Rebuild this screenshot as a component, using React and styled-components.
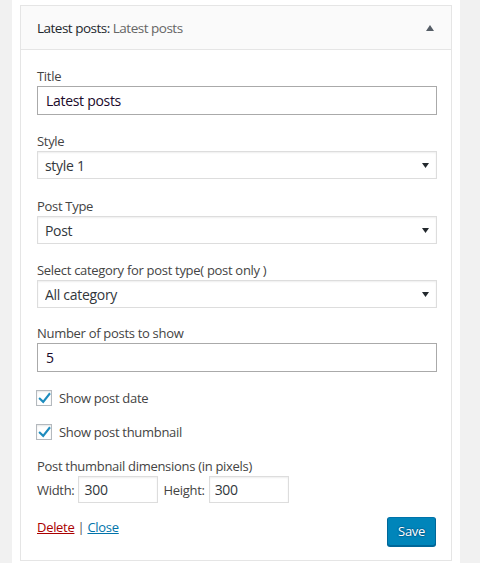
import React, { useState } from 'react';
import styled, { createGlobalStyle } from 'styled-components';

const GlobalStyle = createGlobalStyle`
    html, body {
        margin: 0;
        padding: 0;
        background: #f1f1f1;
    }
    body {
        font-family: "Open Sans", "Noto Sans", sans-serif;
        font-size: 13px;
        color: #444;
    }
    * {
        box-sizing: border-box;
    }
`;

const Column = styled.div`
    width: 448px;
    margin-left: 12px;
    min-height: 563px;
    background: #fff;
    padding: 5px 8px 3px;
`;

const Widget = styled.div`
    border: 1px solid #e5e5e5;
    background: #fff;
`;

const WidgetHeader = styled.div`
    height: 44px;
    display: flex;
    align-items: center;
    justify-content: space-between;
    padding: 0 17px 0 16px;
    background: #fafafa;
    border-bottom: 1px solid #e5e5e5;
`;

const WidgetTitle = styled.h3`
    margin: 0;
    font-size: 13.5px;
    font-weight: 400;
    color: #23282d;
    letter-spacing: -0.5px;
`;

const InTitle = styled.span`
    color: #666;
`;

const ToggleArrow = styled.svg`
    width: 8px;
    height: 6px;
    fill: #555d66;
`;

const WidgetBody = styled.div`
    padding: 16px 14px 14px 16px;
`;

const Field = styled.div`
    margin-top: ${({ $gap }) => $gap}px;
    &:first-child {
        margin-top: 0;
    }
`;

const Label = styled.label`
    display: block;
    line-height: 20px;
    color: #444;
    letter-spacing: -0.3px;
`;

const TextInput = styled.input`
    display: block;
    width: 100%;
    height: 29px;
    margin: 0;
    padding: 0 8px;
    font-family: inherit;
    font-size: 14px;
    letter-spacing: -0.3px;
    color: #1a0a2a;
    background: #fff;
    border: 1px solid #aaa;
    border-radius: 0;
    outline: none;
`;

const SelectWrap = styled.div`
    position: relative;
`;

const Select = styled.select`
    display: block;
    width: 100%;
    height: 28px;
    margin: 0;
    padding: 0 24px 0 7px;
    font-family: inherit;
    font-size: 14px;
    letter-spacing: -0.3px;
    color: #32373c;
    background: #fff;
    border: 1px solid #ddd;
    border-radius: 0;
    box-shadow: inset 0 1px 2px rgba(0, 0, 0, 0.07);
    appearance: none;
    outline: none;
`;

const SelectArrow = styled.svg`
    position: absolute;
    right: 8px;
    top: 12px;
    width: 7px;
    height: 5px;
    fill: #23282d;
    pointer-events: none;
`;

const CheckRow = styled.label`
    display: flex;
    align-items: center;
    gap: 7px;
    margin-top: ${({ $gap }) => $gap}px;
    line-height: 20px;
    color: #444;
    letter-spacing: -0.3px;
    cursor: pointer;
`;

const HiddenCheck = styled.input`
    display: none;
`;

const CheckBox = styled.span`
    width: 16px;
    height: 16px;
    margin-left: -1px;
    border: 1px solid #b4b9be;
    background: #fff;
    box-shadow: inset 0 1px 2px rgba(0, 0, 0, 0.1);
    display: flex;
    align-items: center;
    justify-content: center;
`;

const CheckMark = styled.svg`
    width: 13px;
    height: 12px;
    fill: #1e8cbe;
`;

const SizeRow = styled.div`
    display: flex;
    align-items: center;
    gap: 4px;
    color: #444;
    letter-spacing: -0.3px;
`;

const SizeInput = styled.input`
    width: 80px;
    height: 27px;
    margin: 0 ${({ $end }) => ($end ? 0 : 1)}px 0 0;
    padding: 0 5px;
    font-family: inherit;
    font-size: 14px;
    letter-spacing: -0.3px;
    color: #32373c;
    border: 1px solid #ddd;
    box-shadow: inset 0 1px 2px rgba(0, 0, 0, 0.07);
    outline: none;
`;

const Controls = styled.div`
    display: flex;
    justify-content: space-between;
    align-items: flex-start;
    margin-top: 13px;
    padding-right: 1px;
`;

const Links = styled.div`
    padding-top: 1px;
    line-height: 20px;
    color: #555;
    letter-spacing: -0.3px;
`;

const ActionLink = styled.a`
    color: ${({ $danger }) => ($danger ? '#a00' : '#0073aa')};
    text-decoration: underline;
    cursor: pointer;
`;

const SaveButton = styled.button`
    height: 29px;
    margin-top: 1px;
    padding: 0 10px 1px;
    font-family: inherit;
    font-size: 13px;
    letter-spacing: -0.3px;
    color: #fff;
    background: #0085ba;
    border: 1px solid;
    border-color: #0073aa #006799 #006799;
    border-radius: 3px;
    box-shadow: 0 1px 0 #006799;
    text-shadow: 0 -1px 1px #006799, 1px 0 1px #006799, 0 1px 1px #006799, -1px 0 1px #006799;
    cursor: pointer;
`;

const selects = [
    { label: 'Style', value: 'style 1', options: ['style 1', 'style 2', 'style 3'], gap: 16 },
    { label: 'Post Type', value: 'Post', options: ['Post', 'Page'], gap: 17 },
    { label: 'Select category for post type( post only )', value: 'All category', options: ['All category'], gap: 16 },
];

const Arrow = () => (
    <SelectArrow viewBox="0 0 7 5">
        <polygon points="0,0 7,0 3.5,5" />
    </SelectArrow>
);

const Check = ({ checked, onChange, children, gap }) => (
    <CheckRow $gap={gap}>
        <HiddenCheck type="checkbox" checked={checked} onChange={onChange} />
        <CheckBox>
            {checked && (
                <CheckMark viewBox="0 0 13 12">
                    <path d="M11.2 0.6 L12.8 1.9 L5.3 11.4 L0.4 6.8 L1.8 5.3 L5.1 8.3 Z" />
                </CheckMark>
            )}
        </CheckBox>
        {children}
    </CheckRow>
);

const App = () => {
    const [form, setForm] = useState({
        title: 'Latest posts',
        number: '5',
        showDate: true,
        showThumb: true,
        width: '300',
        height: '300',
        selects: selects.map(s => s.value),
    });

    const update = (key) => (e) => setForm({ ...form, [key]: e.target.value });
    const toggle = (key) => () => setForm({ ...form, [key]: !form[key] });

    return (
        <>
            <GlobalStyle />
            <Column>
                <Widget>
                    <WidgetHeader>
                        <WidgetTitle>
                            Latest posts: <InTitle>{form.title}</InTitle>
                        </WidgetTitle>
                        <ToggleArrow viewBox="0 0 8 6">
                            <polygon points="4,0 8,6 0,6" />
                        </ToggleArrow>
                    </WidgetHeader>
                    <WidgetBody>
                        <Field $gap={0}>
                            <Label>Title</Label>
                            <TextInput value={form.title} onChange={update('title')} />
                        </Field>
                        {selects.map((s, i) => (
                            <Field $gap={s.gap} key={s.label}>
                                <Label>{s.label}</Label>
                                <SelectWrap>
                                    <Select
                                        value={form.selects[i]}
                                        onChange={(e) => {
                                            const next = [...form.selects];
                                            next[i] = e.target.value;
                                            setForm({ ...form, selects: next });
                                        }}
                                    >
                                        {s.options.map(o => <option key={o}>{o}</option>)}
                                    </Select>
                                    <Arrow />
                                </SelectWrap>
                            </Field>
                        ))}
                        <Field $gap={15}>
                            <Label>Number of posts to show</Label>
                            <TextInput value={form.number} onChange={update('number')} />
                        </Field>
                        <Check gap={16} checked={form.showDate} onChange={toggle('showDate')}>
                            Show post date
                        </Check>
                        <Check gap={14} checked={form.showThumb} onChange={toggle('showThumb')}>
                            Show post thumbnail
                        </Check>
                        <Field $gap={14}>
                            <Label>Post thumbnail dimensions (in pixels)</Label>
                            <SizeRow>
                                Width: <SizeInput value={form.width} onChange={update('width')} />
                                Height: <SizeInput $end value={form.height} onChange={update('height')} />
                            </SizeRow>
                        </Field>
                        <Controls>
                            <Links>
                                <ActionLink $danger>Delete</ActionLink> | <ActionLink>Close</ActionLink>
                            </Links>
                            <SaveButton>Save</SaveButton>
                        </Controls>
                    </WidgetBody>
                </Widget>
            </Column>
        </>
    );
};

export default App;
